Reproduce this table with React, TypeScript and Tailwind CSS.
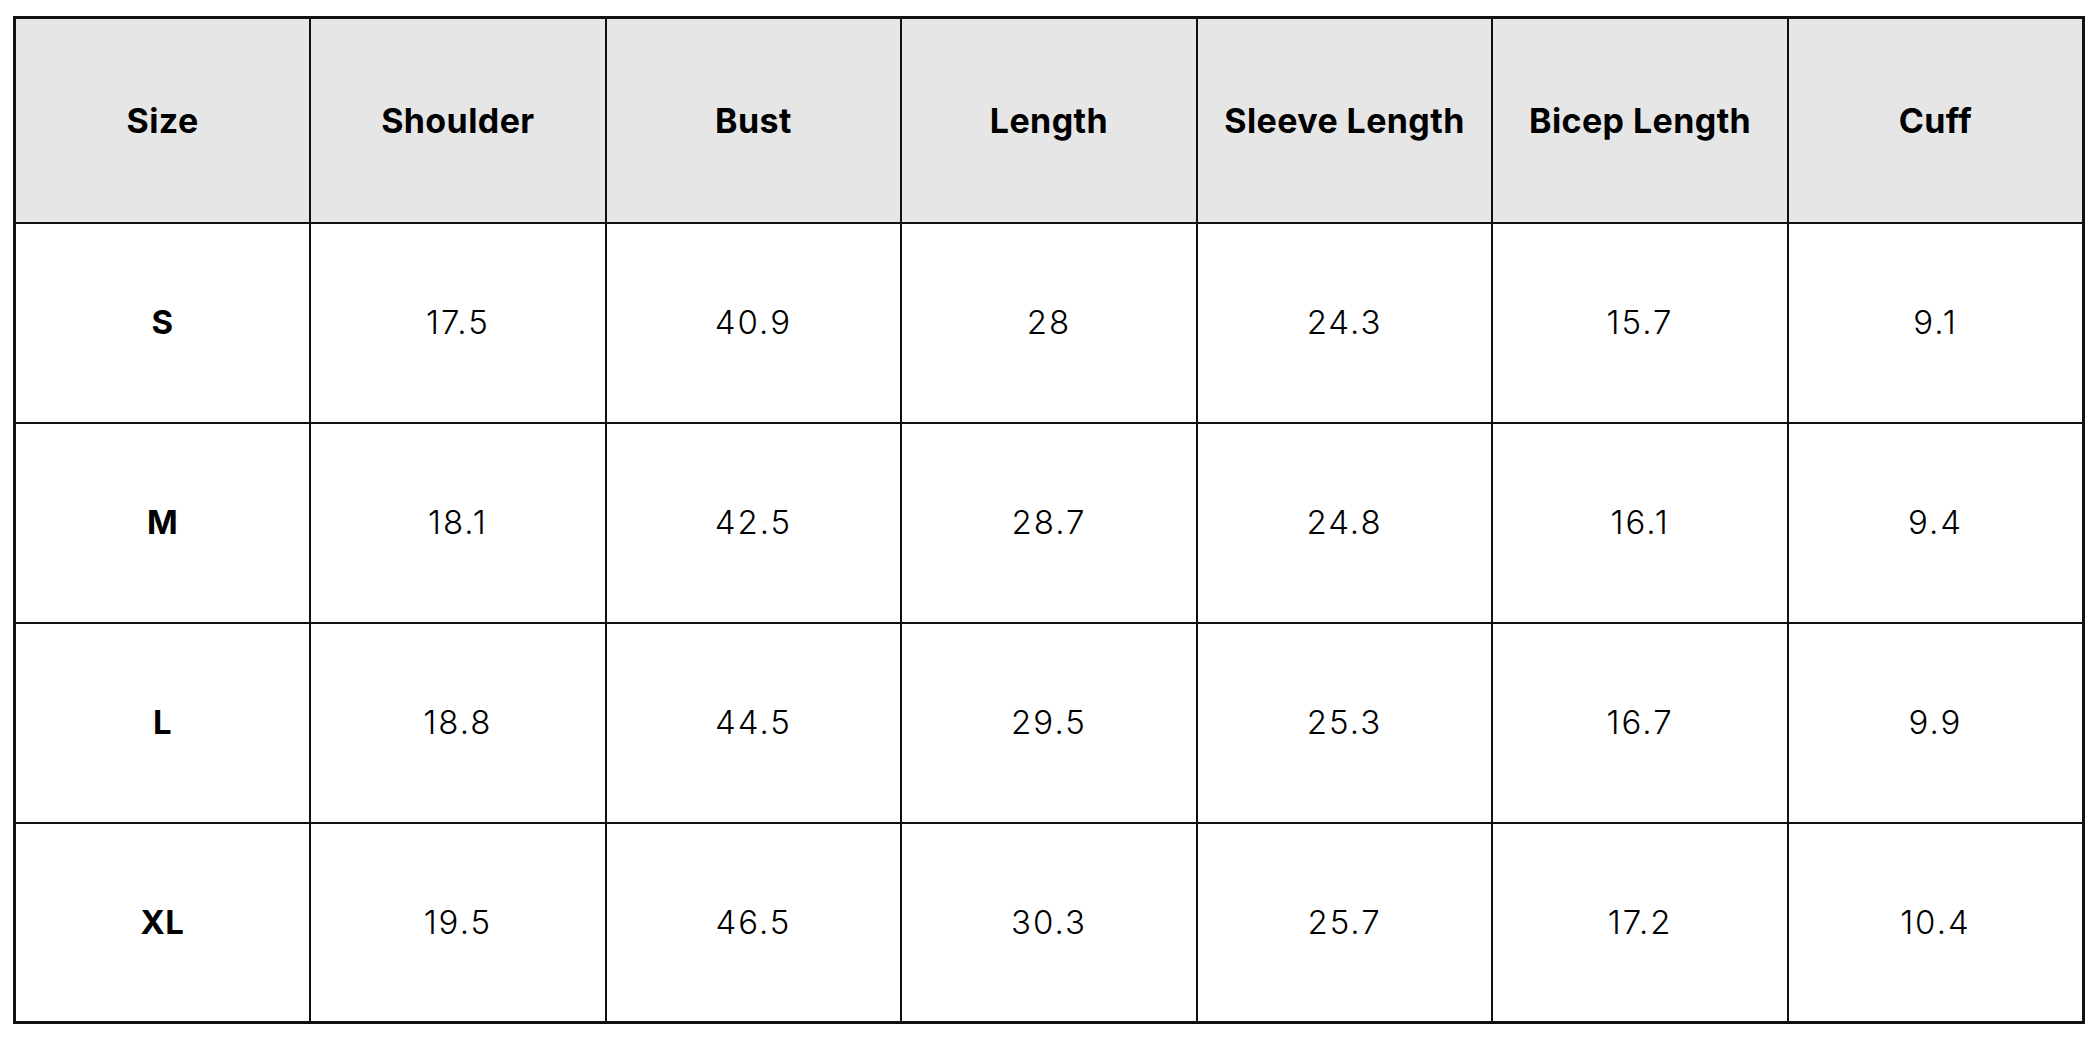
import React from 'react';

const headers = ['Size', 'Shoulder', 'Bust', 'Length', 'Sleeve Length', 'Bicep Length', 'Cuff'];

const rows: string[][] = [
    ['S', '17.5', '40.9', '28', '24.3', '15.7', '9.1'],
    ['M', '18.1', '42.5', '28.7', '24.8', '16.1', '9.4'],
    ['L', '18.8', '44.5', '29.5', '25.3', '16.7', '9.9'],
    ['XL', '19.5', '46.5', '30.3', '25.7', '17.2', '10.4'],
];

const App: React.FC = () => {
    return (
        <div className="w-[2100px] h-[1050px] bg-white pt-[16px] pl-[13px]" style={{ fontFamily: 'Inter, "Noto Sans", sans-serif' }}>
            <table className="w-[2072px] border-collapse border-[3px] border-[#111] table-fixed text-black">
                <thead>
                    <tr className="h-[205px] bg-[#e6e6e6]">
                        {headers.map((h) => (
                            <th key={h} className="border-2 border-[#111] text-[34px] tracking-[0.4px] font-bold text-center align-middle">
                                {h}
                            </th>
                        ))}
                    </tr>
                </thead>
                <tbody>
                    {rows.map((row) => (
                        <tr key={row[0]} className="h-[200px]">
                            {row.map((cell, i) => (
                                <td
                                    key={i}
                                    className={`border-2 border-[#111] text-center align-middle text-[33px] ${i === 0 ? 'font-bold tracking-[0.4px]' : 'font-light tracking-[2px]'}`}
                                >
                                    {cell}
                                </td>
                            ))}
                        </tr>
                    ))}
                </tbody>
            </table>
        </div>
    );
};

export default App;
